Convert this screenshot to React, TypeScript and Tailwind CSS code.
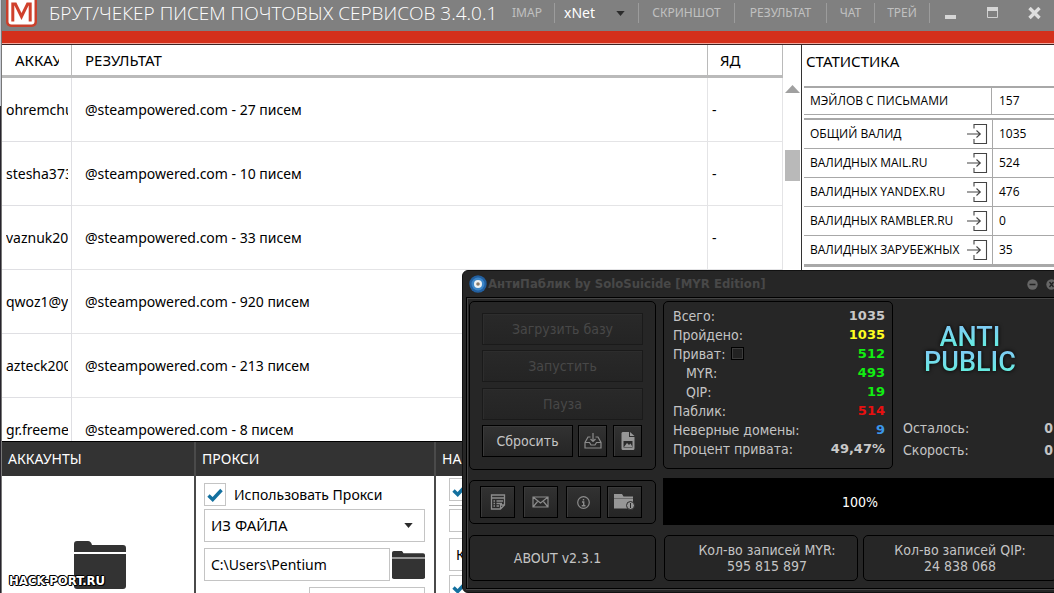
import React from "react";

const letters = [
  { account: "ohremchu", result: "@steampowered.com - 27 писем", money: "-" },
  { account: "stesha373", result: "@steampowered.com - 10 писем", money: "-" },
  { account: "vaznuk20", result: "@steampowered.com - 33 писем", money: "-" },
  { account: "qwoz1@y", result: "@steampowered.com - 920 писем", money: "" },
  { account: "azteck200", result: "@steampowered.com - 213 писем", money: "" },
  { account: "gr.freeme", result: "@steampowered.com - 8 писем", money: "" },
];

const validRows = [
  { label: "ОБЩИЙ ВАЛИД", value: "1035" },
  { label: "ВАЛИДНЫХ MAIL.RU", value: "524" },
  { label: "ВАЛИДНЫХ YANDEX.RU", value: "476" },
  { label: "ВАЛИДНЫХ RAMBLER.RU", value: "0" },
  { label: "ВАЛИДНЫХ ЗАРУБЕЖНЫХ", value: "35" },
];

function LogoM() {
  return (
    <svg width="32" height="31" viewBox="0 0 32 31" className="block shrink-0" aria-hidden="true">
      <rect x="1" y="-5" width="31" height="32" rx="5" fill="#c9402c" />
      <rect x="3.5" y="-3" width="26" height="27.5" rx="3" fill="#fff" />
      <path d="M7.8 21.5V4h2.6l6.100 12.500L22.600 4h2.600v17.500" fill="none" stroke="#d0402c" strokeWidth="3" />
    </svg>
  );
}

function Folder({ className }: { className: string }) {
  return (
    <svg viewBox="0 0 52 48" preserveAspectRatio="none" className={className} aria-hidden="true">
      <path d="M0 11V3a3 3 0 0 1 3-3h11c2 0 3 1 4 4h31a3 3 0 0 1 3 3v4z" fill="#333" />
      <path d="M0 13h52v32a3 3 0 0 1-3 3H3a3 3 0 0 1-3-3z" fill="#333" />
    </svg>
  );
}

function CheckBox({ id, label }: { id: string; label?: string }) {
  return (
    <span className="grid h-[23px] w-[22px] shrink-0 place-items-center">
      <input
        id={id}
        type="checkbox"
        defaultChecked
        aria-label={label}
        className="peer col-start-1 row-start-1 h-full w-full appearance-none border border-[#c4c4c4] bg-white"
      />
      <svg
        viewBox="0 0 16 14"
        className="pointer-events-none invisible col-start-1 row-start-1 h-[14px] w-4 peer-checked:visible"
        aria-hidden="true"
      >
        <path d="M1.5 7.5l4.2 4L14.5 2" fill="none" stroke="#13709f" strokeWidth="3.4" />
      </svg>
    </span>
  );
}

function Caret({ className }: { className: string }) {
  return (
    <svg viewBox="0 0 10 6" className={className} aria-hidden="true">
      <path d="M0 0h10L5 6z" fill="#2b2b2b" />
    </svg>
  );
}

function ImportIcon() {
  return (
    <svg width="21" height="22" viewBox="0 0 21 22" fill="none" stroke="#444" strokeWidth="1.1" aria-hidden="true">
      <path d="M7 5.5V1.5h12.5v19H7V16" />
      <path d="M0 11h13M9.5 7.5l3.800 3.500-3.800 3.500" />
    </svg>
  );
}

function TitleBar() {
  const tab = "flex h-5 items-center justify-center border-r border-[#9c9c9c] text-xs text-[#c0c0c0]";
  return (
    <header className="flex h-[31px] shrink-0 items-start bg-[#808080]">
      <div className="ml-[3px]">
        <LogoM />
      </div>
      <h1 className="ml-3 whitespace-nowrap font-['Open_Sans','Noto_Sans',sans-serif] text-[19px] leading-[27px] font-light text-white">
        БРУТ/ЧЕКЕР ПИСЕМ ПОЧТОВЫХ СЕРВИСОВ 3.4.0.1
      </h1>
      <nav className="ml-auto flex shrink-0 items-center pt-[3px]">
        <button className={tab + " w-[55px]"}>IMAP</button>
        <div className="grid h-5 w-[84px] items-center border-r border-[#9c9c9c]">
          <select
            aria-label="Библиотека"
            className="col-start-1 row-start-1 h-5 w-full appearance-none bg-transparent pl-[9px] text-sm leading-5 text-white"
          >
            <option>xNet</option>
          </select>
          <Caret className="pointer-events-none col-start-1 row-start-1 mr-[13px] h-[5px] w-[9px] justify-self-end" />
        </div>
        <button className={tab + " w-24"}>СКРИНШОТ</button>
        <button className={tab + " w-[92px]"}>РЕЗУЛЬТАТ</button>
        <button className={tab + " w-12"}>ЧАТ</button>
        <button className={tab + " w-[55px]"}>ТРЕЙ</button>
        <button aria-label="Свернуть" className="flex h-5 w-[42px] items-center justify-center">
          <svg width="12" height="12" viewBox="0 0 12 12">
            <path d="M0 8h11v4H0z" fill="#d6d6d6" />
          </svg>
        </button>
        <button aria-label="Развернуть" className="flex h-5 w-[42px] items-center justify-center">
          <svg width="12" height="12" viewBox="0 0 12 12">
            <path d="M.5 1.5V10.5h10V1.5" fill="none" stroke="#d0d0d0" />
            <path d="M0 0h11v4H0z" fill="#d6d6d6" />
          </svg>
        </button>
        <button aria-label="Закрыть" className="flex h-5 w-10 items-center justify-center">
          <svg width="13" height="13" viewBox="0 0 13 13">
            <path d="M1.5 1l10 10M11.5 1l-10 10" stroke="#dedede" strokeWidth="3.4" />
          </svg>
        </button>
      </nav>
    </header>
  );
}

function ResultsTable() {
  const head = "border-r border-b-[3px] border-[#bababa] py-0 text-[15px] font-normal";
  return (
    <div className="flex min-w-0 flex-1 overflow-hidden">
      <table className="w-full table-fixed border-separate border-spacing-0 self-start text-left text-sm leading-5 text-black">
        <colgroup>
          <col className="w-[70px]" />
          <col />
          <col className="w-[75px]" />
        </colgroup>
        <thead>
          <tr className="h-[33px]">
            <th className={head + " pr-3 pl-[13px]"}>
              <div className="overflow-hidden">АККАУНТЫ</div>
            </th>
            <th className={head + " pl-[13px]"}>РЕЗУЛЬТАТ</th>
            <th className={head + " pl-3"}>ЯД</th>
          </tr>
        </thead>
        <tbody>
          {letters.map((row) => (
            <tr key={row.account} className="h-16">
              <td className="border-r border-b border-[#dfdfe3] py-0 pr-[3px] pl-1">
                <div className="overflow-hidden whitespace-nowrap">{row.account}</div>
              </td>
              <td className="border-r border-b border-[#e4e4e6] py-0 pl-[13px] whitespace-nowrap">{row.result}</td>
              <td className="border-r border-b border-[#e4e4e6] py-0 pl-1">{row.money}</td>
            </tr>
          ))}
        </tbody>
      </table>
      <div className="flex w-[18px] shrink-0 flex-col items-center pt-10">
        <svg width="15" height="8" viewBox="0 0 15 8" aria-hidden="true">
          <path d="M0 8h15L7.5 0z" fill="#a0a0a0" />
        </svg>
        <div className="mt-[57px] h-[31px] w-[15px] bg-[#b9b9b9]" />
      </div>
    </div>
  );
}

function Statistics() {
  return (
    <aside className="w-[253px] shrink-0 border-l border-[#333] pl-[2px] text-black">
      <h2 className="pt-[6px] pl-[2px] text-[15px] leading-5">СТАТИСТИКА</h2>
      <table className="mt-[15px] w-full table-fixed border-separate border-spacing-0 text-left font-['Open_Sans','Noto_Sans',sans-serif] text-xs leading-4">
        <tbody>
          <tr className="h-[29px]">
            <th className="w-[188px] border-t-2 border-r border-b border-[#a8a8a8] py-0 pl-[6px] font-normal">
              МЭЙЛОВ С ПИСЬМАМИ
            </th>
            <td className="border-t-2 border-b border-[#a8a8a8] py-0 pl-[7px]">157</td>
          </tr>
        </tbody>
      </table>
      <table className="mt-[3px] w-full table-fixed border-separate border-spacing-0 border-t-2 border-b-2 border-[#a8a8a8] text-left font-['Open_Sans','Noto_Sans',sans-serif] text-xs leading-4">
        <tbody>
          {validRows.map((row) => (
            <tr key={row.label} className="h-[29px]">
              <th className="w-[189px] border-r border-b border-[#a8a8a8] py-0 pr-1 pl-[6px] font-normal">
                <div className="flex items-center justify-between">
                  <span className="whitespace-nowrap">{row.label}</span>
                  <button aria-label="Открыть" className="shrink-0">
                    <ImportIcon />
                  </button>
                </div>
              </th>
              <td className="border-b border-[#a8a8a8] py-0 pl-[6px]">{row.value}</td>
            </tr>
          ))}
        </tbody>
      </table>
    </aside>
  );
}

function Settings() {
  const head = "flex h-[34px] items-center bg-[#333] text-sm text-white";
  return (
    <section className="grid h-[152px] shrink-0 grid-cols-[194px_240px_1fr] overflow-hidden border-t border-black">
      <div className="border-r-2 border-[#4a4a4a]">
        <h2 className={head + " pl-[6px]"}>АККАУНТЫ</h2>
        <div className="flex justify-center pt-[65px] pl-1">
          <button aria-label="Выбрать файл аккаунтов">
            <Folder className="h-12 w-[52px]" />
          </button>
        </div>
      </div>
      <div className="border-r-2 border-[#4a4a4a]">
        <h2 className={head + " pl-[6px]"}>ПРОКСИ</h2>
        <div className="flex flex-col pt-[7px] pr-[9px] pl-2 text-black">
          <div className="flex items-center gap-2">
            <CheckBox id="use-proxy" />
            <label htmlFor="use-proxy" className="text-sm leading-5 whitespace-nowrap">
              Использовать Прокси
            </label>
          </div>
          <div className="mt-[3px] grid items-center">
            <select
              aria-label="Источник прокси"
              className="col-start-1 row-start-1 h-[33px] w-full appearance-none border border-[#c4c4c4] bg-white pl-[6px] text-[15px]"
            >
              <option>ИЗ ФАЙЛА</option>
            </select>
            <Caret className="pointer-events-none col-start-1 row-start-1 mr-3 h-[5px] w-[9px] justify-self-end" />
          </div>
          <div className="mt-[6px] flex items-center gap-[2px]">
            <input
              aria-label="Путь к файлу"
              defaultValue="C:\Users\Pentium"
              className="h-[33px] min-w-0 flex-1 border border-[#c4c4c4] px-[6px] text-sm"
            />
            <button aria-label="Выбрать файл прокси" className="shrink-0">
              <Folder className="h-7 w-[33px]" />
            </button>
          </div>
          <input aria-label="Таймаут" className="mt-[6px] h-[33px] w-[116px] self-end border border-[#c4c4c4]" />
        </div>
      </div>
      <div>
        <h2 className={head + " pl-[6px]"}>НА</h2>
        <div className="flex w-[220px] flex-col pt-[2px] pl-[13px]">
          <CheckBox id="option-one" label="Параметр 1" />
          <hr className="mt-1 border-[#b0b0b0]" />
          <input aria-label="Параметр 2" className="mt-[3px] h-[23px] border border-[#c4c4c4]" />
          <input
            aria-label="Параметр 3"
            defaultValue="К"
            className="mt-[6px] h-[33px] border border-[#c4c4c4] px-[6px] text-sm"
          />
          <div className="mt-1">
            <CheckBox id="option-four" label="Параметр 4" />
          </div>
        </div>
      </div>
    </section>
  );
}

const counters = [
  { label: "Всего:", value: "1035", tone: "text-[#c8c8c8]", pad: "" },
  { label: "Пройдено:", value: "1035", tone: "text-[#ffff20]", pad: "" },
  { label: "Приват:", value: "512", tone: "text-[#12ee12]", pad: "", box: true },
  { label: "MYR:", value: "493", tone: "text-[#12ee12]", pad: "pl-[13px]" },
  { label: "QIP:", value: "19", tone: "text-[#12ee12]", pad: "pl-[13px]" },
  { label: "Паблик:", value: "514", tone: "text-[#e81010]", pad: "" },
  { label: "Неверные домены:", value: "9", tone: "text-[#3b96ea]", pad: "" },
  { label: "Процент привата:", value: "49,47%", tone: "text-[#c8c8c8]", pad: "" },
];

const panel = "rounded-[5px] border border-black bg-[#262626]";
const darkButton = "flex items-center justify-center border border-black bg-linear-to-b from-[#323232] to-[#252525] shadow-[inset_1px_1px_0_#3a3a3a]";
const disabledButton =
  "flex h-8 items-center justify-center border border-[#1a1a1a] bg-linear-to-b from-[#292929] to-[#242424] text-[#484848] shadow-[inset_1px_1px_0_#2d2d2d]";

function AntiPublic() {
  return (
    <div className="absolute top-[270px] left-[462px] w-[602px] rounded-md border border-[#111] bg-[#262626] px-[3px] pb-[3px] font-['DejaVu_Sans_Condensed','DejaVu_Sans',sans-serif] text-sm text-[#c4c4c4]">
      <header className="flex h-[26px] items-center">
        <svg width="18" height="18" viewBox="0 0 18 18" className="ml-[3px] shrink-0" aria-hidden="true">
          <circle cx="9" cy="9" r="8.7" fill="#225f9f" />
          <circle cx="9" cy="9" r="6.5" fill="#3c86c8" />
          <circle cx="9" cy="9" r="4" fill="#eef1f2" />
          <circle cx="9" cy="9" r="1.8" fill="#8a7a68" />
        </svg>
        <h2 className="ml-[1px] text-[13px] font-bold whitespace-nowrap text-[#484848]">
          АнтиПаблик by SoloSuicide [MYR Edition]
        </h2>
        <div className="mr-[3px] ml-auto flex gap-2">
          <button aria-label="Свернуть окно">
            <svg width="11" height="11" viewBox="0 0 11 11">
              <circle cx="5.5" cy="5.5" r="5.2" fill="#666" />
              <path d="M2.5 5.5h6" stroke="#222" strokeWidth="1.5" />
            </svg>
          </button>
          <button aria-label="Закрыть окно">
            <svg width="11" height="11" viewBox="0 0 11 11">
              <circle cx="5.5" cy="5.5" r="5.2" fill="#666" />
              <path d="M3.5 3l4 5M7.5 3l-4 5" stroke="#222" strokeWidth="1.3" />
            </svg>
          </button>
        </div>
      </header>
      <div className="flex gap-[7px] border border-black px-[2px] pt-[3px] pb-[7px] shadow-[inset_1px_1px_0_#444,0_1px_0_#444]">
        <div className="flex w-[187px] shrink-0 flex-col">
          <div className={panel + " flex h-[169px] flex-col px-3 pt-[11px]"}>
            <button disabled className={disabledButton}>Загрузить базу</button>
            <button disabled className={disabledButton + " mt-[5px]"}>Запустить</button>
            <button disabled className={disabledButton + " mt-[6px]"}>Пауза</button>
            <div className="mt-[5px] flex gap-[5px]">
              <button className={darkButton + " h-8 w-[91px]"}>Сбросить</button>
              <button aria-label="Загрузить" className={darkButton + " h-8 w-[29px]"}>
                <svg width="18" height="16" viewBox="0 0 18 16" fill="none" stroke="#8c8c8c" strokeWidth="1.2" aria-hidden="true">
                  <path d="M6.5 4H4L1 9.5V15h16V9.5L14 4h-2.5" />
                  <path d="M1 9.5h4.5l1.5 2.5h4l1.5-2.5H17M9 0v8.5M6.5 6L9 8.5 11.5 6" />
                </svg>
              </button>
              <button aria-label="Изображение" className={darkButton + " ml-[1px] h-8 w-[29px]"}>
                <svg width="14" height="18" viewBox="0 0 14 18" aria-hidden="true">
                  <path d="M1.5 0H8v5h5.500v11.500a1.500 1.500 0 0 1-1.500 1.500H2A1.500 1.500 0 0 1 .500 16.500V1z" fill="#979797" />
                  <path d="M9 0l4.500 4H9z" fill="#979797" />
                  <path d="M2.5 9h9v6.500h-9z" fill="#2b2b2b" />
                  <path d="M3 15l3-4 2 2 1.500-1.500L11.500 15z" fill="#979797" />
                </svg>
              </button>
            </div>
          </div>
          <div className={panel + " mt-[10px] flex h-11 items-center px-[10px]"}>
            <button aria-label="Заметки" className={darkButton + " h-8 w-[35px]"}>
              <svg width="16" height="16" viewBox="0 0 16 16" fill="none" stroke="#8c8c8c" strokeWidth="1.3" aria-hidden="true">
                <path d="M1.5 1h13v10l-4 4h-9zM1 4h14M14.5 11h-4v4M3.5 7H5M6.5 7H13M3.5 9.5H5M6.5 9.5H12M3.5 12H5M6.5 12H9" />
              </svg>
            </button>
            <button aria-label="Почта" className={darkButton + " ml-2 h-8 w-[35px]"}>
              <svg width="17" height="12" viewBox="0 0 17 12" fill="none" stroke="#8c8c8c" strokeWidth="1.2" aria-hidden="true">
                <path d="M1 1h15v10H1zM1 1l7.5 6L16 1M1 11l5-6M16 11l-5-6" />
              </svg>
            </button>
            <button aria-label="Информация" className={darkButton + " ml-2 h-8 w-[35px]"}>
              <svg width="13" height="13" viewBox="0 0 13 13" fill="none" stroke="#8c8c8c" strokeWidth="1.2" aria-hidden="true">
                <circle cx="6.5" cy="6.5" r="5.8" />
                <path d="M6.5 3v1.5M5 6h1.7v3.5M4.7 9.7h3.8" strokeWidth="1.4" />
              </svg>
            </button>
            <button aria-label="Папка" className={darkButton + " ml-[6px] h-8 w-[35px]"}>
              <svg width="21" height="16" viewBox="0 0 21 16" aria-hidden="true">
                <path d="M0 0h8l1.5 2.5H19v12H0z" fill="#979797" />
                <path d="M0 4.5h19" stroke="#6c6c6c" />
                <circle cx="16.5" cy="11.5" r="4" fill="#979797" stroke="#2a2a2a" />
                <path d="M16.5 9v5" stroke="#2a2a2a" />
              </svg>
            </button>
          </div>
          <button className={panel + " mt-[11px] h-[46px] pr-[10px]"}>ABOUT v2.3.1</button>
        </div>
        <div className="flex min-w-0 flex-1 flex-col">
          <div className="flex">
            <dl className={panel + " h-[168px] w-[230px] shrink-0 pt-1 pr-[7px] pl-[9px]"}>
              {counters.map((c) => (
                <div key={c.label} className="flex h-[19px] items-center justify-between">
                  <dt className={"flex items-center gap-[6px] whitespace-nowrap " + c.pad}>
                    {c.label}
                    {c.box && (
                      <input
                        type="checkbox"
                        aria-label="Приват"
                        className="h-[13px] w-[13px] appearance-none border border-black bg-[#222] shadow-[inset_0_0_0_1px_#3c3c3c]"
                      />
                    )}
                  </dt>
                  <dd className={"pt-[2px] font-['DejaVu_Sans',sans-serif] text-[13px] font-bold " + c.tone}>{c.value}</dd>
                </div>
              ))}
            </dl>
            <div className="flex min-w-0 flex-1 flex-col pr-1 pl-[10px]">
              <div className="flex h-[116px] flex-col items-center pt-6 pr-4 font-['Roboto',sans-serif] text-[27px] leading-[25px] font-medium drop-shadow-[0_0_2px_#000]">
                <span className="bg-linear-to-b from-[#7fc9f5] to-[#5ff3dc] bg-clip-text text-transparent">ANTI</span>
                <span className="bg-linear-to-b from-[#7fc9f5] to-[#5ff3dc] bg-clip-text text-transparent">PUBLIC</span>
              </div>
              <div className="flex h-[22px] items-center justify-between">
                <span>Осталось:</span>
                <b>0</b>
              </div>
              <div className="flex h-[22px] items-center justify-between">
                <span>Скорость:</span>
                <b>0</b>
              </div>
            </div>
          </div>
          <div role="progressbar" aria-valuenow={100} className="mt-[9px] flex h-[47px] items-center justify-center bg-black text-white">
            100%
          </div>
          <div className="mt-[10px] grid grid-cols-2 gap-[5px] pl-[1px] text-center leading-4">
            <div className={panel + " flex h-[46px] flex-col justify-center pl-3"}>
              <span>Кол-во записей MYR:</span>
              <span>595 815 897</span>
            </div>
            <div className={panel + " flex h-[46px] flex-col justify-center"}>
              <span>Кол-во записей QIP:</span>
              <span>24 838 068</span>
            </div>
          </div>
        </div>
      </div>
    </div>
  );
}

export default function App() {
  return (
    <div className="relative flex h-screen overflow-hidden bg-white font-['Noto_Sans','Open_Sans',sans-serif]">
      <div className="flex w-[2px] shrink-0 flex-col border-r border-[#777]">
        <div className="h-[106px] bg-[#c9cdd6]" />
        <div className="flex-1 bg-[#26232b]" />
      </div>
      <div className="flex min-w-0 flex-1 flex-col">
        <TitleBar />
        <div className="h-[14px] shrink-0 border-b border-[#3a2222] bg-[#d4301b] shadow-[inset_0_-1px_0_#f0a9a0]" />
        <main className="flex min-h-0 flex-1">
          <ResultsTable />
          <Statistics />
        </main>
        <Settings />
      </div>
      <AntiPublic />
      <div className="absolute bottom-[4px] left-[9px] font-['DejaVu_Sans_Condensed','DejaVu_Sans',sans-serif] text-[13px] leading-4 font-bold text-white [text-shadow:1px_0_#000,-1px_0_#000,0_1px_#000,0_-1px_#000,1px_1px_#000,-1px_-1px_#000]">
        HACK-PORT.RU
      </div>
    </div>
  );
}
